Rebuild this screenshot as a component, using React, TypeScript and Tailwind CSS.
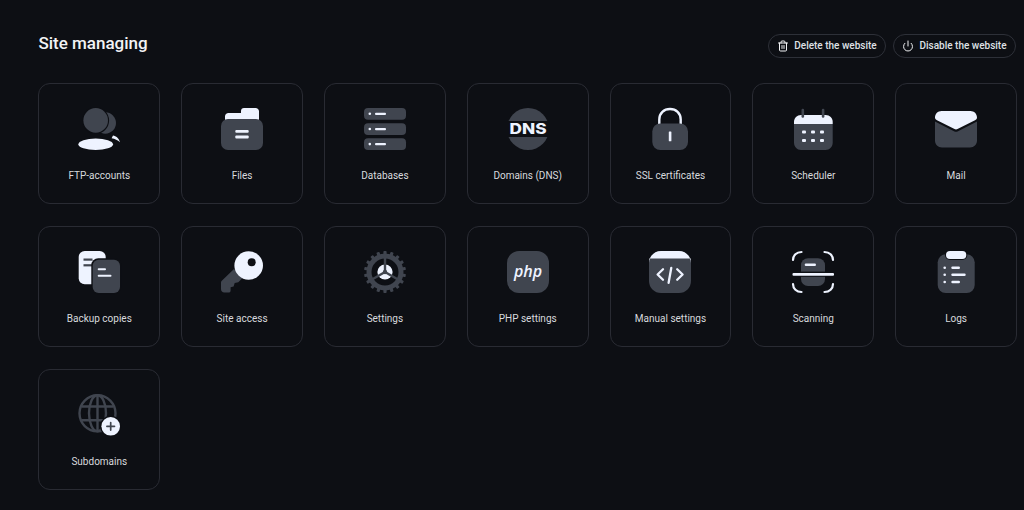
import React from 'react';
import { Trash2, Power } from 'lucide-react';

const DARK = '#40454f';
const LIGHT = '#eef3ff';
const BG = '#0d0f14';

const Svg: React.FC<{ children: React.ReactNode }> = ({ children }) => (
    <svg width="42" height="42" viewBox="0 0 42 42" fill="none" className="overflow-visible shrink-0">
        {children}
    </svg>
);

const FtpIcon = () => (
    <Svg>
        <circle cx="27.3" cy="15" r="10.7" fill={DARK} />
        <circle cx="17.7" cy="12.4" r="13.4" fill={BG} />
        <circle cx="17.7" cy="12.4" r="12.3" fill={DARK} />
        <ellipse cx="17.7" cy="36.3" rx="17.3" ry="5.7" fill={LIGHT} />
        <path d="M35 27.4C38 27.8 41 30.2 42 34.2C39.6 32.2 37 30.8 33.6 30.2Z" fill={LIGHT} />
    </Svg>
);

const FilesIcon = () => (
    <Svg>
        <path d="M4 12V8.5C4 6.5 5.5 5 7.5 5H20V3C20 1.2 21.2 0 23 0H34.5C36.5 0 38 1.5 38 3.5V12Z" fill={LIGHT} />
        <rect x="0" y="11" width="42" height="31" rx="7" fill={DARK} />
        <rect x="14.3" y="22" width="13.4" height="2.8" rx="1" fill={LIGHT} />
        <rect x="14.3" y="27.6" width="13.4" height="3" rx="1" fill={LIGHT} />
    </Svg>
);

const DatabaseIcon = () => (
    <Svg>
        {[0, 15.2, 30.3].map(y => (
            <g key={y}>
                <rect x="0" y={y} width="42" height="11.7" rx="4" fill={DARK} />
                <circle cx="5.8" cy={y + 5.8} r="1.3" fill={LIGHT} />
                <rect x="11" y={y + 4.7} width="11" height="2.3" rx="1" fill={LIGHT} />
            </g>
        ))}
    </Svg>
);

const DnsIcon = () => (
    <Svg>
        <circle cx="21" cy="21" r="21" fill={DARK} />
        <rect x="-1" y="13" width="44" height="16" fill={BG} />
        <text x="21" y="26" textAnchor="middle" textLength="37" lengthAdjust="spacingAndGlyphs" fontFamily="Inter, sans-serif" fontWeight="800" fontSize="14.5" fill={LIGHT}>DNS</text>
    </Svg>
);

const SslIcon = () => (
    <Svg>
        <path d="M10.3 16V11.5C10.3 5 15 1 21 1C27 1 31.7 5 31.7 11.5V16" stroke={LIGHT} strokeWidth="2.4" />
        <rect x="3.3" y="15.5" width="35.7" height="26.5" rx="8" fill={DARK} />
        <rect x="19.8" y="23.5" width="2.6" height="9.8" rx="0.6" fill={LIGHT} />
    </Svg>
);

const SchedulerIcon = () => (
    <Svg>
        <path d="M2 16V14C2 10 5 7 9 7H33.7C37.7 7 40.7 10 40.7 14V16Z" fill={LIGHT} />
        <path d="M2 16H40.7V34.5C40.7 38.7 37.7 42 33.5 42H9C5 42 2 38.7 2 34.5Z" fill={DARK} />
        <rect x="9.5" y="0.8" width="2.6" height="9" rx="1.2" fill={DARK} />
        <rect x="29.8" y="0.8" width="2.6" height="9" rx="1.2" fill={DARK} />
        {[24, 32.6].map(y =>
            [12, 21, 30].map(x => <rect key={`${x}-${y}`} x={x - 2} y={y - 1.5} width="4" height="3" rx="1" fill={LIGHT} />)
        )}
    </Svg>
);

const MailIcon = () => (
    <Svg>
        <path d="M0 13.5L19 23.3C20.3 24 21.7 24 23 23.3L42 13.5V32.5C42 36.5 39 39.5 35 39.5H7C3 39.5 0 36.5 0 32.5Z" fill={DARK} />
        <path d="M0 9.5C0 5.8 3 3 6.5 3H35.5C39 3 42 5.8 42 9.5C42 11 41 11.8 40 12.3L22.5 21C21.5 21.5 20.5 21.5 19.5 21L2 12.3C1 11.8 0 11 0 9.5Z" fill={LIGHT} />
    </Svg>
);

const BackupIcon = () => (
    <Svg>
        <rect x="0.7" y="0" width="27" height="33.3" rx="6" fill={LIGHT} />
        <rect x="5.5" y="7.5" width="9" height="2.2" fill={DARK} />
        <rect x="5.5" y="13.2" width="9" height="2.2" fill={DARK} />
        <rect x="13.3" y="7.3" width="30" height="36" rx="7" fill={BG} />
        <rect x="14.7" y="8.7" width="27.3" height="33.3" rx="6" fill={DARK} />
        <rect x="19.7" y="17.2" width="8.3" height="2" rx="1" fill={LIGHT} />
        <rect x="19.7" y="23.8" width="13.8" height="2" rx="1" fill={LIGHT} />
    </Svg>
);

const KeyIcon = () => (
    <Svg>
        <path d="M13 18L0.8 29.7C0.3 30.2 0 30.9 0 31.6V38C0 40.1 1.4 41.5 3.3 41.5H7.5C8.8 41.5 9.6 40.7 9.6 39.4V36.2L12.6 35.6L13.7 32L17.3 31.2L23 25.5Z" fill={DARK} />
        <circle cx="27.7" cy="14.5" r="14.3" fill={LIGHT} />
        <circle cx="30.7" cy="11.3" r="4" fill={BG} />
    </Svg>
);

const SettingsIcon = () => (
    <Svg>
        {Array.from({ length: 18 }).map((_, i) => (
            <rect key={i} x="19.4" y="0" width="3.2" height="6" rx="0.8" fill={DARK} transform={`rotate(${i * 20} 21 21)`} />
        ))}
        <circle cx="21" cy="21" r="16" stroke={DARK} strokeWidth="5" />
        <circle cx="21" cy="21" r="7.6" fill={LIGHT} />
        {[0, 120, 240].map(a => (
            <rect key={a} x="19.8" y="6" width="2.4" height="15" fill={DARK} transform={`rotate(${a} 21 21)`} />
        ))}
        <circle cx="21" cy="21" r="2.2" fill={DARK} />
    </Svg>
);

const PhpIcon = () => (
    <Svg>
        <rect width="42" height="42" rx="12" fill={DARK} />
        <text x="21" y="26" textAnchor="middle" fontFamily="'Open Sans', sans-serif" fontStyle="italic" fontWeight="600" fontSize="16" fill={LIGHT}>php</text>
    </Svg>
);

const ManualIcon = () => (
    <Svg>
        <rect width="42" height="42" rx="12" fill={DARK} />
        <path d="M0 7.5V12C0 5.4 5.4 0 12 0H30C36.6 0 42 5.4 42 12V7.5Z" fill={LIGHT} />
        <path d="M14 18.2L8.6 23.5L14 28.8M28.2 18.2L33.6 23.5L28.2 28.8M22.3 16.8L19.6 31.8" stroke={LIGHT} strokeWidth="2.3" strokeLinecap="round" strokeLinejoin="round" />
    </Svg>
);

const ScanIcon = () => (
    <Svg>
        <rect x="9" y="7.3" width="24" height="27.7" rx="7" fill={DARK} />
        <rect x="0" y="20.6" width="42" height="5.2" fill={BG} />
        <rect x="0.5" y="22.1" width="41.5" height="2.6" rx="1" fill={LIGHT} />
        <rect x="12.7" y="12.5" width="11.3" height="2.4" rx="1.2" fill={LIGHT} />
        <path d="M1 9C1 4.5 4.5 1 9.5 1M41 9C41 4.5 37.5 1 32.5 1M1 33C1 37.5 4.5 41 9.5 41M41 33C41 37.5 37.5 41 32.5 41" stroke={LIGHT} strokeWidth="2.2" strokeLinecap="round" />
    </Svg>
);

const LogsIcon = () => (
    <Svg>
        <rect x="2.7" y="3.3" width="37" height="38.7" rx="8" fill={DARK} />
        <rect x="10" y="-1" width="22.3" height="10" rx="5" fill={BG} />
        <rect x="11" y="0" width="20.3" height="8" rx="4" fill={LIGHT} />
        {[16.7, 23.7, 31].map((y, i) => (
            <g key={y}>
                <circle cx="9.7" cy={y} r="1.3" fill={LIGHT} />
                <rect x="16.3" y={y - 1.2} width={i === 1 ? 14.4 : 8.7} height="2.4" rx="1.2" fill={LIGHT} />
            </g>
        ))}
    </Svg>
);

const SubdomainIcon = () => (
    <Svg>
        <g stroke={DARK} strokeWidth="2.4">
            <circle cx="19.5" cy="19.3" r="18" />
            <ellipse cx="19.5" cy="19.3" rx="8.5" ry="18" />
            <path d="M19.5 1.3V37.3M3.5 12.5H35.5M3.5 26.2H35.5" />
        </g>
        <circle cx="32.7" cy="32.3" r="10.6" fill={BG} />
        <circle cx="32.7" cy="32.3" r="9.3" fill={LIGHT} />
        <path d="M32.7 28.5V36.1M28.9 32.3H36.5" stroke={DARK} strokeWidth="1.7" strokeLinecap="round" />
    </Svg>
);

const items = [
    { label: 'FTP-accounts', icon: <FtpIcon /> },
    { label: 'Files', icon: <FilesIcon /> },
    { label: 'Databases', icon: <DatabaseIcon /> },
    { label: 'Domains (DNS)', icon: <DnsIcon /> },
    { label: 'SSL certificates', icon: <SslIcon /> },
    { label: 'Scheduler', icon: <SchedulerIcon /> },
    { label: 'Mail', icon: <MailIcon /> },
    { label: 'Backup copies', icon: <BackupIcon /> },
    { label: 'Site access', icon: <KeyIcon /> },
    { label: 'Settings', icon: <SettingsIcon /> },
    { label: 'PHP settings', icon: <PhpIcon /> },
    { label: 'Manual settings', icon: <ManualIcon /> },
    { label: 'Scanning', icon: <ScanIcon /> },
    { label: 'Logs', icon: <LogsIcon /> },
    { label: 'Subdomains', icon: <SubdomainIcon /> },
];

const App: React.FC = () => {
    return (
        <div className="h-[510px] overflow-hidden bg-[#0d0f14] pt-[34px] pl-[38.4px] pr-[7px] font-['Roboto',sans-serif]">
            {/* Header */}
            <div className="flex items-start justify-between mb-[25px] pr-[1px]">
                <h1 className="text-[17px] leading-[18px] font-medium text-[#f2f3f5]">Site managing</h1>
                <div className="flex items-center gap-[7px]">
                    <button className="h-[24px] w-[118px] flex items-center justify-center gap-[5px] rounded-full border border-[#2d3038] text-[10px] leading-[14px] font-medium text-[#dfe1e6]">
                        <Trash2 size={12} color="#f2f3f5" /> Delete the website
                    </button>
                    <button className="h-[24px] w-[123px] flex items-center justify-center gap-[5px] rounded-full border border-[#2d3038] text-[10px] leading-[14px] font-medium text-[#dfe1e6]">
                        <Power size={12} color="#f2f3f5" /> Disable the website
                    </button>
                </div>
            </div>

            {/* Tiles */}
            <div className="grid grid-cols-7 gap-x-[21px] gap-y-[22px]">
                {items.map(item => (
                    <div key={item.label} className="h-[121px] rounded-[12px] border border-[#292b33] flex flex-col items-center pt-[24px]">
                        {item.icon}
                        <span className="mt-[18px] text-[10px] leading-[16px] text-[#d8dade]">{item.label}</span>
                    </div>
                ))}
            </div>
        </div>
    );
};

export default App;
